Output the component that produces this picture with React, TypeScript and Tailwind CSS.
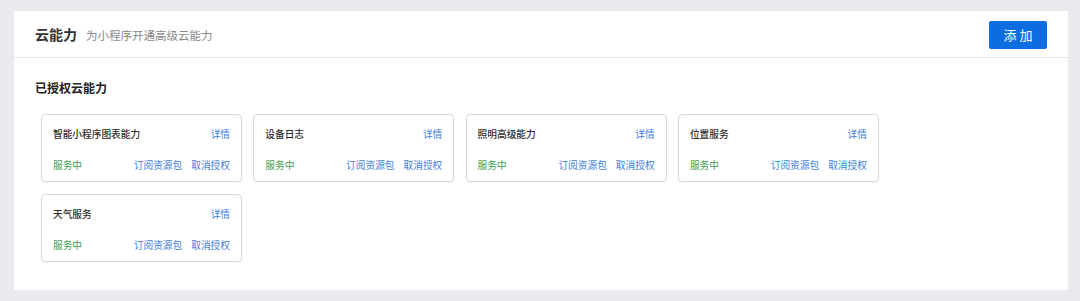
import React from "react";

const cards = [
  "智能小程序图表能力",
  "设备日志",
  "照明高级能力",
  "位置服务",
  "天气服务",
];

function Card({ title }: { title: string }) {
  return (
    <div className="w-[201px] h-[68px] box-border border border-[#d6d6d6] rounded-[4px] bg-white px-[11px] pt-[13px] pb-[10px] flex flex-col justify-between shadow-[0_1px_2px_rgba(0,0,0,0.04)]">
      <div className="flex items-center justify-between leading-[12px] text-[9.7px]">
        <span className="text-[#2b2b2b] font-medium">{title}</span>
        <span className="text-[#3d7ee0]">详情</span>
      </div>
      <div className="flex items-center justify-between leading-[12px] text-[9.7px]">
        <span className="text-[#3ea04f]">服务中</span>
        <div className="flex gap-[9px] text-[#3d7ee0]">
          <span>订阅资源包</span>
          <span>取消授权</span>
        </div>
      </div>
    </div>
  );
}

export default function App() {
  return (
    <div
      className="w-[1080px] h-[301px] bg-[#e9eaee] pt-[11px] pl-[14px] pr-[12px] box-border"
      style={{ fontFamily: '"Noto Sans CJK SC", "Noto Sans", sans-serif' }}
    >
      <div className="bg-white h-[279px] flex flex-col">
        <div className="h-[47px] border-b border-[#e8e8ea] flex items-center justify-between pl-[21px] pr-[21px]">
          <div className="flex items-baseline gap-[9px]">
            <span className="text-[14px] font-semibold text-[#333]">云能力</span>
            <span className="text-[11.5px] text-[#888]">为小程序开通高级云能力</span>
          </div>
          <button className="w-[58px] h-[28px] mt-[1px] bg-[#0b6de0] rounded-[2px] text-white text-[13px] tracking-[3px] pl-[3px] flex items-center justify-center">
            添加
          </button>
        </div>
        <div className="pl-[21px] pt-[21px]">
          <div className="text-[12px] leading-[17px] font-semibold text-[#222]">已授权云能力</div>
          <div className="mt-[18px] ml-[6px] flex flex-wrap gap-x-[11.3px] gap-y-[12px] w-[860px]">
            {cards.map((c) => (
              <Card key={c} title={c} />
            ))}
          </div>
        </div>
      </div>
    </div>
  );
}
